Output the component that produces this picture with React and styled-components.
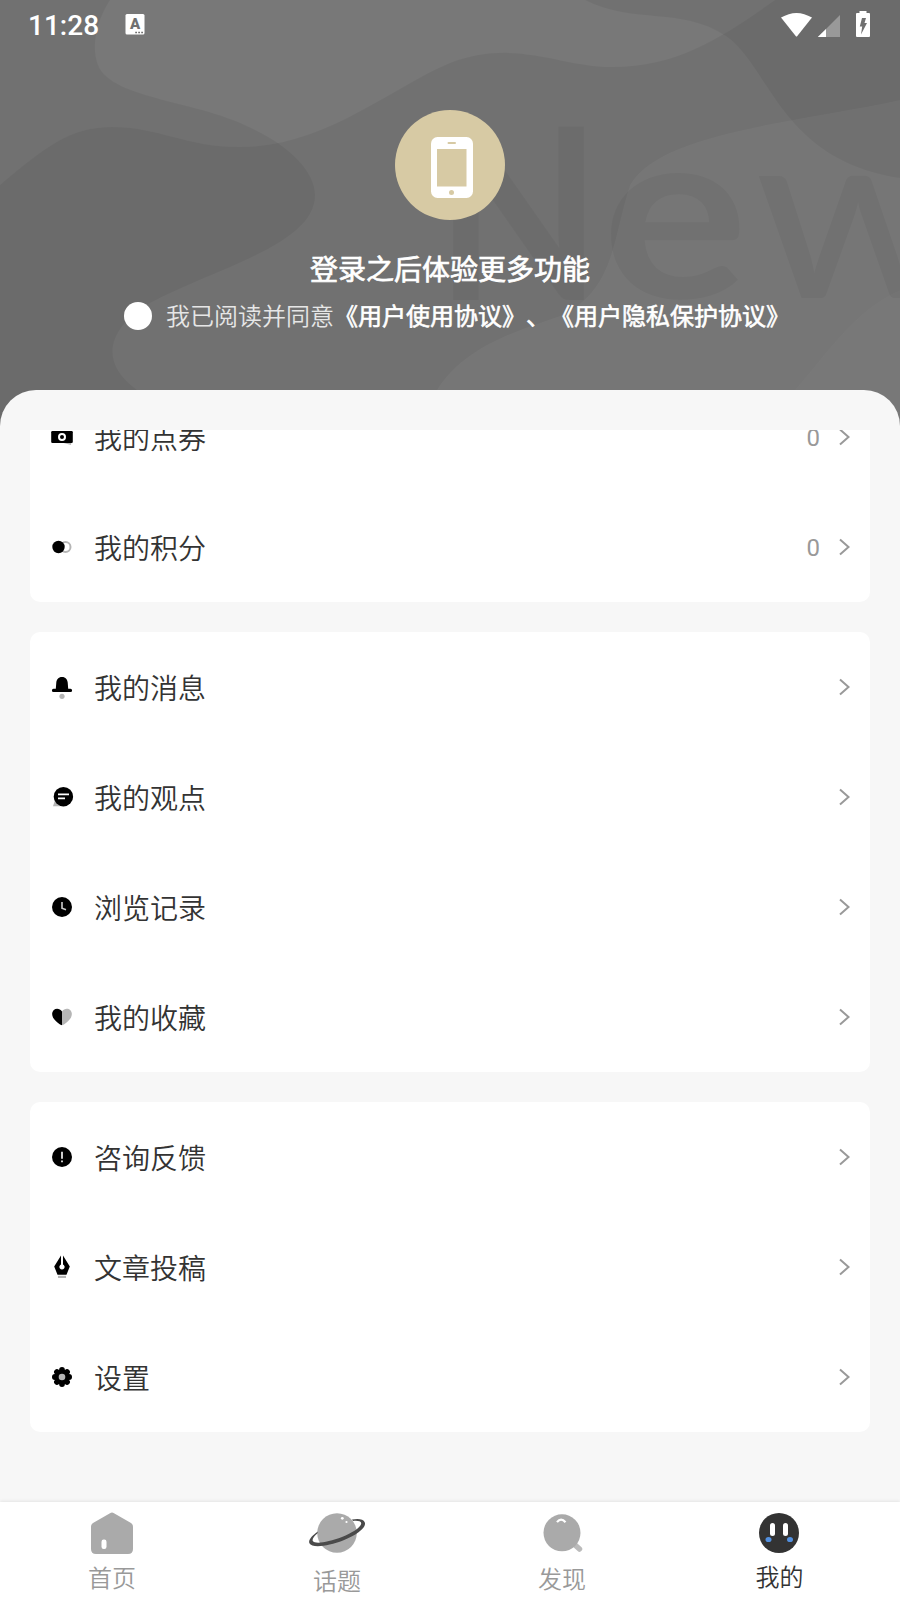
import React from "react";
import styled, { createGlobalStyle } from "styled-components";

const GlobalStyle = createGlobalStyle`
  * {
    box-sizing: border-box;
  }
  body {
    margin: 0;
    font-family: Roboto, "Noto Sans CJK SC", sans-serif;
    background-color: #f7f7f7;
    text-spacing-trim: space-all;
  }
`;

const Page = styled.div`
  display: flex;
  flex-direction: column;
  width: 900px;
  height: 1600px;
  overflow: hidden;
  background-color: #f7f7f7;
`;

const Header = styled.header`
  position: relative;
  height: 430px;
  flex-shrink: 0;
  color: #fff;
`;

const Backdrop = styled.svg`
  position: absolute;
  inset: 0;
  z-index: 0;
`;

const HeaderContent = styled.div`
  position: relative;
  z-index: 1;
  display: flex;
  flex-direction: column;
  height: 100%;
`;

const StatusBar = styled.div`
  display: flex;
  align-items: center;
  justify-content: space-between;
  height: 48px;
  padding: 1px 29px 0 28px;
`;

const StatusGroup = styled.div`
  display: flex;
  align-items: center;
  gap: 26px;
`;

const Clock = styled.span`
  font-size: 28px;
  font-weight: 500;
  line-height: 44px;
  padding-top: 3px;
`;

const Login = styled.div`
  display: flex;
  flex-direction: column;
  align-items: center;
  padding-top: 62px;
`;

const Avatar = styled.div`
  display: flex;
  align-items: center;
  justify-content: center;
  width: 110px;
  height: 110px;
  padding: 4px 0 0 3px;
  border-radius: 50%;
  background-color: #d7caa4;
`;

const Title = styled.h1`
  margin: 31px 0 0;
  font-size: 28px;
  font-weight: 400;
  line-height: 40px;
  -webkit-text-stroke: 0.7px #fff;
`;

const Agreement = styled.div`
  display: flex;
  align-items: center;
  height: 36px;
  margin-top: 7px;
  padding-left: 14px;
  font-size: 24px;
  line-height: 36px;
  white-space: nowrap;
`;

const Radio = styled.span`
  width: 28px;
  height: 28px;
  margin-right: 14px;
  border-radius: 50%;
  background-color: #fff;
`;

const Muted = styled.span`
  padding-top: 2px;
  color: #e6e6e6;
  font-weight: 350;
`;

const Strong = styled.span`
  padding-top: 2px;
  -webkit-text-stroke: 0.6px #fff;
`;

const SheetTop = styled.div`
  height: 40px;
  margin-top: auto;
  border-radius: 36px 36px 0 0;
  background-color: #f7f7f7;
`;

const List = styled.main`
  flex: 1;
  min-height: 0;
  display: flex;
  flex-direction: column;
  justify-content: flex-end;
  gap: 30px;
  padding: 0 30px 70px;
  overflow: hidden;
`;

const Card = styled.section`
  flex-shrink: 0;
  border-radius: 10px;
  background-color: #fff;
`;

const Row = styled.div`
  display: flex;
  align-items: center;
  height: 110px;
  padding: 0 19px 0 20px;
`;

const Label = styled.span`
  flex: 1;
  margin-left: 20px;
  padding-top: 6px;
  color: #333;
  font-size: 28px;
  font-weight: 350;
  line-height: 40px;
`;

const Value = styled.span`
  margin-right: 17px;
  color: #999;
  font-size: 24px;
  line-height: 36px;
  padding-top: 2px;
`;

const TabBar = styled.nav`
  display: flex;
  flex-shrink: 0;
  height: 98px;
  padding-right: 16px;
  background-color: #fff;
  box-shadow: 0 -1px 3px rgba(0, 0, 0, 0.08);
`;

const Tab = styled.div`
  display: flex;
  flex-direction: column;
  align-items: center;
  width: 225px;
  flex-shrink: ${({ $active }) => ($active ? 1 : 0)};
  padding-top: 8px;
  color: ${({ $active }) => ($active ? "#333" : "#999")};

  &:first-child {
    margin-left: -1px;
  }
`;

const TabLabel = styled.span`
  margin-top: ${({ $top }) => $top}px;
  padding-left: 1px;
  font-size: 24px;
  font-weight: 350;
  line-height: 30px;
`;

const Waves = () => (
  <Backdrop width="900" height="430" viewBox="0 0 900 430">
    <rect width="900" height="430" fill="#787878" />
    <path
      fill="#000"
      fillOpacity="0.05"
      d="M0 185C45 147 70 127 112 127C160 127 185 147 240 147C325 147 390 88 450 63C515 38 560 67 612 67C680 67 725 35 775 0H900V430H0Z"
    />
    <path
      fill="#000"
      fillOpacity="0.05"
      d="M0 0H110C94 25 92 50 98 65C112 100 200 100 255 130C290 147 315 172 315 195C315 245 215 268 150 303C112 325 95 360 137 390V430H0Z"
    />
    <path
      fill="#000"
      fillOpacity="0.05"
      d="M585 0C635 25 680 6 726 36C770 66 780 160 900 178V0Z"
    />
    <path
      fill="#fff"
      fillOpacity="0.04"
      d="M900 100C800 122 660 132 630 185C612 240 615 290 560 316C520 330 465 345 437 390V430H900Z"
    />
    <path fill="#fff" fillOpacity="0.02" d="M795 390C830 350 855 310 900 290V430H780Z" />
    <g fill="#000" fillOpacity="0.04" fontFamily="Lato" fontSize="240" fontWeight="700">
      <text x="436" y="300" textLength="165" lengthAdjust="spacingAndGlyphs">N</text>
      <text x="602" y="298" textLength="146" lengthAdjust="spacingAndGlyphs">e</text>
      <text x="755" y="298" fontWeight="500" textLength="206" lengthAdjust="spacingAndGlyphs">w</text>
    </g>
  </Backdrop>
);

const Chevron = () => (
  <svg width="14" height="20" viewBox="0 0 14 20" fill="none" stroke="#999" strokeWidth="2">
    <path d="M3 2.500L11.500 10L3 17.500" />
  </svg>
);

const icons = {
  ticket: (
    <>
      <path fill="#b5b5b5" d="M10 17L21.500 16L21 20Z" />
      <rect x="1.2" y="6" width="21.6" height="12" rx="1.2" fill="#000" />
      <circle cx="12" cy="12" r="3" fill="none" stroke="#fff" strokeWidth="2" />
    </>
  ),
  points: (
    <>
      <circle cx="15.5" cy="12" r="5" fill="none" stroke="#b5b5b5" strokeWidth="2" />
      <circle cx="8.5" cy="12" r="6.2" fill="#000" />
    </>
  ),
  bell: (
    <>
      <circle cx="12" cy="21.3" r="2.6" fill="#b5b5b5" />
      <path
        fill="#000"
        d="M12 2C8.300 2 6.600 4.500 6.300 7.500L5.800 13.800H3.500A1.600 1.600 0 0 0 3.500 17H20.500A1.600 1.600 0 0 0 20.500 13.800H18.200L17.700 7.500C17.400 4.500 15.700 2 12 2Z"
      />
    </>
  ),
  chat: (
    <>
      <path fill="#b5b5b5" d="M5 15L3 21.300H10Z" />
      <circle cx="13.4" cy="11.7" r="9.7" fill="#000" />
      <path stroke="#fff" strokeWidth="1.8" d="M8 9.300H19M8 13.300H15" />
    </>
  ),
  clock: (
    <>
      <circle cx="12" cy="12" r="10" fill="#000" />
      <path fill="none" stroke="#ccc" strokeWidth="1.6" d="M12 7V13.200L16 14.800" />
    </>
  ),
  heart: (
    <>
      <path fill="#000" d="M12 6.500C10 3.300 6 3 3.800 5C1.300 7.500 1.800 11.500 4.200 14.200C6.500 16.800 9.500 19.500 12 20.300Z" />
      <path fill="#b5b5b5" d="M12 6.500C14 3.300 18 3 20.200 5C22.700 7.500 22.200 11.500 19.800 14.200C17.500 16.800 14.500 19.500 12 20.300Z" />
    </>
  ),
  feedback: (
    <>
      <circle cx="12" cy="12" r="10" fill="#000" />
      <path stroke="#ccc" strokeWidth="2" d="M12 6.800V13.800M12 15.500V17.300" />
    </>
  ),
  pen: (
    <>
      <rect x="8" y="20.8" width="8" height="2.2" fill="#b5b5b5" />
      <path fill="#000" d="M11 .5L4.200 11.500L7.500 19.700H16.500L19.800 11.500L13 .5V9.500A2.600 2.600 0 1 1 11 9.500Z" />
    </>
  ),
  gear: (
    <>
      <g fill="#000">
        <circle cx="12" cy="12" r="7.5" />
        {[0, 45, 90, 135, 180, 225, 270, 315].map((a) => (
          <circle key={a} cx="12" cy="4.9" r="2.9" transform={`rotate(${a} 12 12)`} />
        ))}
      </g>
      <circle cx="12" cy="12" r="3.3" fill="#b5b5b5" />
    </>
  ),
};

const groups = [
  [
    { icon: "ticket", label: "我的点券", value: "0" },
    { icon: "points", label: "我的积分", value: "0" },
  ],
  [
    { icon: "bell", label: "我的消息" },
    { icon: "chat", label: "我的观点" },
    { icon: "clock", label: "浏览记录" },
    { icon: "heart", label: "我的收藏" },
  ],
  [
    { icon: "feedback", label: "咨询反馈" },
    { icon: "pen", label: "文章投稿" },
    { icon: "gear", label: "设置" },
  ],
];

const tabs = [
  {
    label: "首页",
    top: 8,
    icon: (
      <>
        <path
          fill="#aaa"
          d="M28 3.300Q30 1.500 32 3.300L49 13Q51 14.300 51 17V39Q51 44 46 44H14Q9 44 9 39V17Q9 14.300 11 13Z"
        />
        <rect x="19.5" y="29.5" width="5" height="9.5" rx="2.2" fill="#fff" />
      </>
    ),
  },
  {
    label: "话题",
    top: 11,
    icon: (
      <>
        <circle cx="30" cy="23" r="19.8" fill="#aaa" />
        <circle cx="35.3" cy="8.3" r="1.4" fill="#fff" />
        <circle cx="39.5" cy="12" r="1.1" fill="#fff" />
        <path
          fill="#4a4a4a"
          d="M11 21.500C5 25.500 1 30 2.400 33.200C5 38.500 22 36 36 30.500C50 25 60 17 57.700 12.300C56.500 9 51 8.500 45 9.600L46 11C50 10.400 54 11 54.200 13C54.500 17 46 22.500 35 27C22 32 8 34.500 5.800 31C4.800 29 7.500 25.500 10.300 23.500Z"
        />
      </>
    ),
  },
  {
    label: "发现",
    top: 9,
    icon: (
      <>
        <path stroke="#bbb" strokeWidth="5.5" strokeLinecap="round" d="M43 35L47.500 39" />
        <circle cx="30" cy="22.8" r="18.5" fill="#aaa" />
        <path fill="none" stroke="#fff" strokeWidth="2.2" d="M25 12.200Q29 7 33.500 12.200" />
      </>
    ),
  },
  {
    label: "我的",
    top: 7,
    active: true,
    icon: (
      <>
        <circle cx="30" cy="23" r="20" fill="#333" />
        <rect x="21" y="13" width="5" height="13" rx="2.5" fill="#fff" />
        <rect x="34" y="13" width="5" height="13" rx="2.5" fill="#fff" />
        <ellipse cx="19.5" cy="29.5" rx="3" ry="2.6" fill="#5290e0" />
        <ellipse cx="41" cy="29.5" rx="3" ry="2.6" fill="#5290e0" />
      </>
    ),
  },
];

const App = () => {
  return (
    <>
      <GlobalStyle />
      <Page>
        <Header>
          <Waves />
          <HeaderContent>
            <StatusBar>
              <StatusGroup>
                <Clock>11:28</Clock>
                <svg width="20" height="22" viewBox="0 0 20 22">
                  <rect x="0.5" y="0" width="19" height="20.5" rx="1.5" fill="#fff" />
                  <text x="10" y="15" textAnchor="middle" fontFamily="Roboto" fontSize="15" fontWeight="900" fill="#707070">
                    A
                  </text>
                  <path stroke="#707070" strokeWidth="1.5" strokeDasharray="1.8 1.2" d="M10.200 18.500H19" />
                </svg>
              </StatusGroup>
              <StatusGroup>
                <svg width="92" height="28" viewBox="0 0 92 28">
                  <path fill="#fff" d="M2 6.600Q17.500 -2.800 33 6.600L18.300 25Q17.500 26 16.700 25Z" />
                  <path fill="#999" d="M61 4V26H39Z" />
                  <path fill="#fff" d="M47 18V26H38.800Z" />
                  <path fill="#fff" d="M80.500 0H87.500V2H90Q91 2 91 3V25Q91 26 90 26H78Q77 26 77 25V3Q77 2 78 2H80.500Z" />
                  <path fill="#707070" d="M83 7H87L85.500 12H88L82 23.500L83.200 15.500H80.800Z" />
                </svg>
              </StatusGroup>
            </StatusBar>
            <Login>
              <Avatar>
                <svg width="42" height="62" viewBox="0 0 42 62">
                  <rect y="1" width="42" height="61" rx="6.5" fill="#fff" />
                  <rect x="6" y="13" width="29.5" height="37.5" fill="#d7caa4" />
                  <rect x="16.5" y="6" width="8.5" height="2" rx="1" fill="#d7caa4" />
                  <circle cx="20.500" cy="56.5" r="2.5" fill="#d7caa4" />
                </svg>
              </Avatar>
              <Title>登录之后体验更多功能</Title>
              <Agreement>
                <Radio />
                <Muted>我已阅读并同意</Muted>
                <Strong>《用户使用协议》、《用户隐私保护协议》</Strong>
              </Agreement>
            </Login>
            <SheetTop />
          </HeaderContent>
        </Header>
        <List>
          {groups.map((rows) => (
            <Card key={rows[0].icon}>
              {rows.map((row) => (
                <Row key={row.icon}>
                  <svg width="24" height="24" viewBox="0 0 24 24">
                    {icons[row.icon]}
                  </svg>
                  <Label>{row.label}</Label>
                  {row.value && <Value>{row.value}</Value>}
                  <Chevron />
                </Row>
              ))}
            </Card>
          ))}
        </List>
        <TabBar>
          {tabs.map((tab) => (
            <Tab key={tab.label} $active={tab.active}>
              <svg width="60" height="46" viewBox="0 0 60 46" fill="none">
                {tab.icon}
              </svg>
              <TabLabel $top={tab.top}>{tab.label}</TabLabel>
            </Tab>
          ))}
        </TabBar>
      </Page>
    </>
  );
};

export default App;
